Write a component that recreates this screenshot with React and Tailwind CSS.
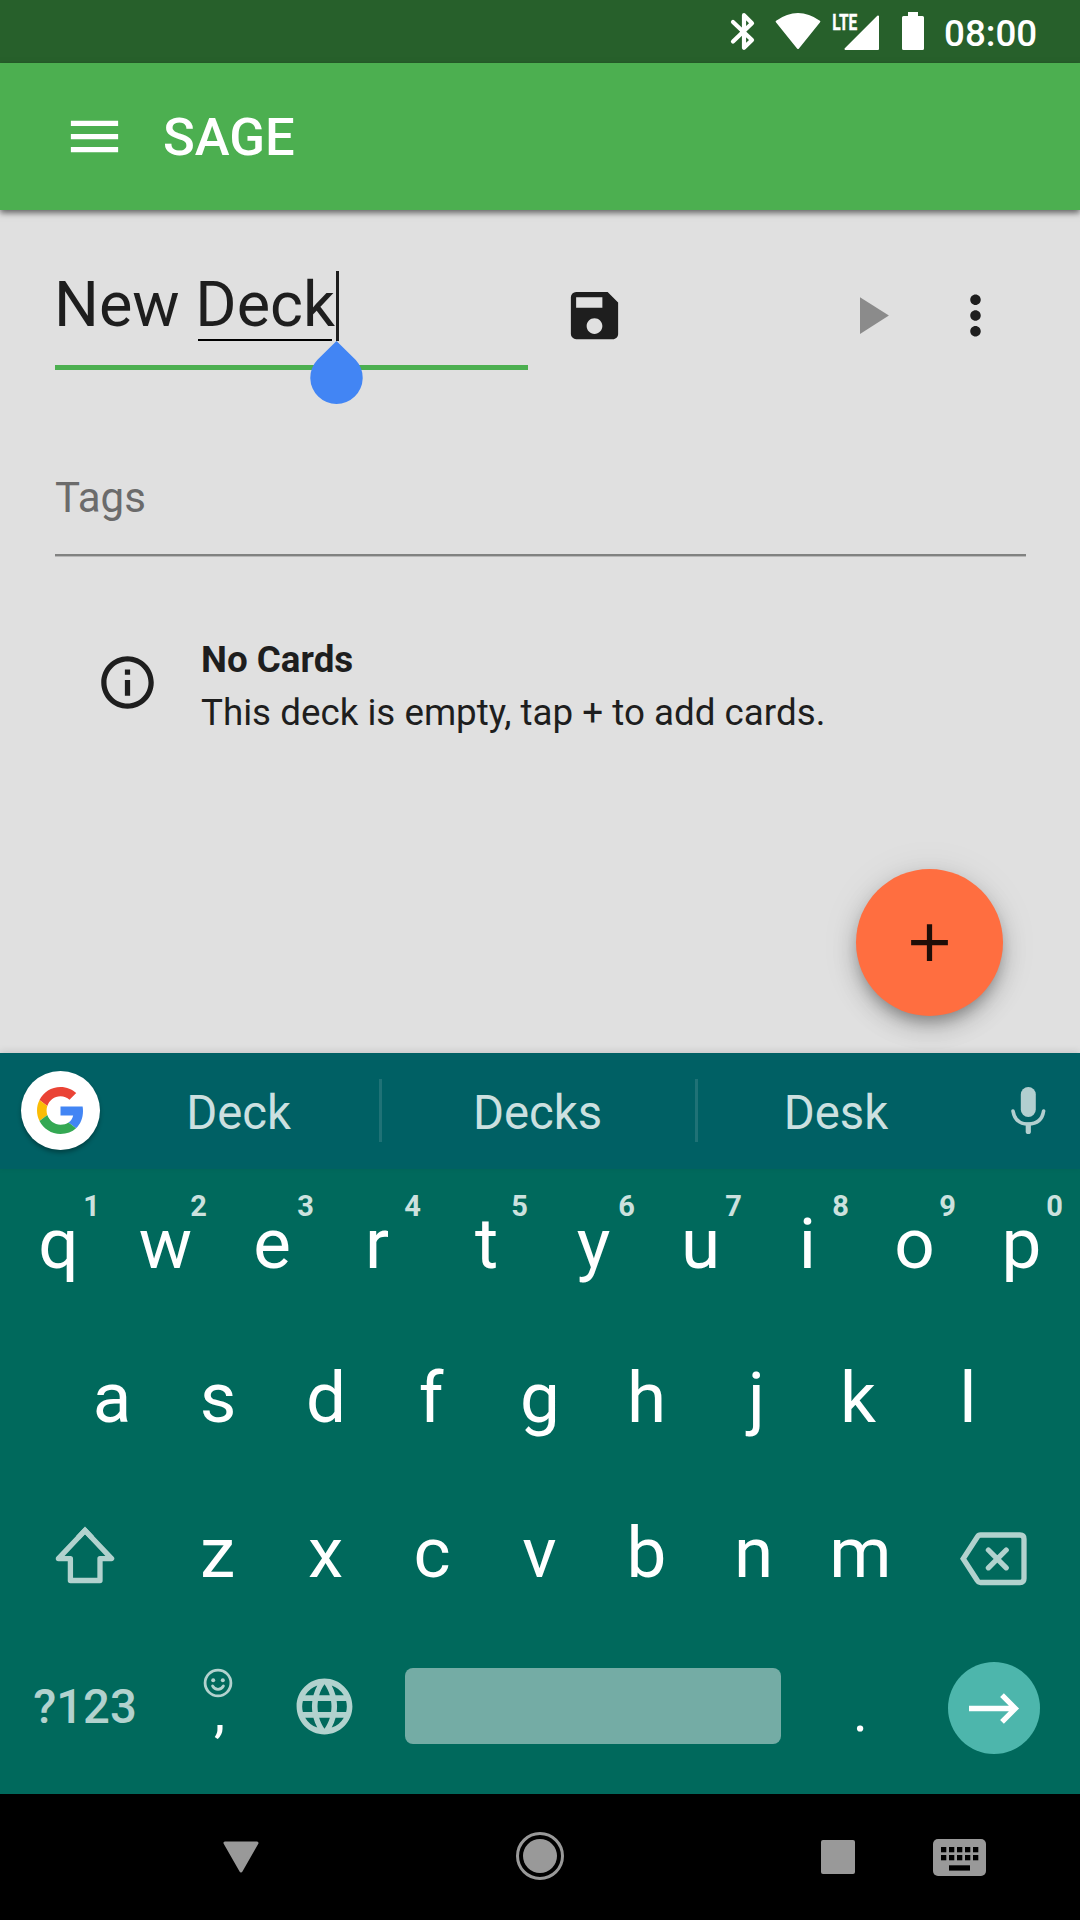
import React from "react";
import { MdMenu, MdSave, MdPlayArrow, MdMoreVert, MdInfoOutline, MdAdd, MdLanguage } from "react-icons/md";

function StatusBar() {
  return (
    <div className="flex h-[63px] shrink-0 items-start bg-[#27602b] pl-[728px] text-white">
      <svg className="mt-[10px] h-[43px] w-[30px]" viewBox="0 0 30 43" fill="none" stroke="currentColor" strokeWidth="4.2" strokeLinecap="round" strokeLinejoin="round">
        <path d="M5 12L24 30L16 37.8V5.2L24 13.2L5 31.5" />
      </svg>
      <svg className="ml-[17px] mt-[12px] h-[39px] w-[46px]" viewBox="0 0 46 39" fill="currentColor" stroke="currentColor" strokeWidth="2" strokeLinejoin="round">
        <path d="M23 36L1.7 9.5Q23 -5.5 44.3 9.5Z" />
      </svg>
      <svg className="ml-[7px] mt-[7px] h-[45px] w-[54px]" viewBox="-4 -4 54 45" fill="currentColor">
        <text x="0.3" y="18.8" fontSize="22.5" fontWeight="700" stroke="currentColor" strokeWidth="0.4" textLength="25" lengthAdjust="spacingAndGlyphs">LTE</text>
        <path d="M13.5 38L46 5.5V38Z" stroke="currentColor" strokeWidth="2" strokeLinejoin="round" />
      </svg>
      <svg className="ml-[20px] mt-[12px] h-[38px] w-[22px]" viewBox="0 0 22 38" fill="currentColor">
        <path d="M6 0H16V4H20.5Q22 4 22 5.5V36.5Q22 38 20.5 38H1.5Q0 38 0 36.5V5.5Q0 4 1.5 4H6Z" />
      </svg>
      <span className="ml-[20px] text-[36.75px] font-medium leading-[67px]">08:00</span>
    </div>
  );
}

function AppBar() {
  return (
    <header className="relative z-10 flex h-[147px] shrink-0 items-center bg-[#4caf50] pl-[63px] text-white shadow-[0_3px_6px_rgba(0,0,0,0.55)]">
      <MdMenu size={63} />
      <h1 className="ml-[37px] mt-[2px] text-[52.5px] font-medium leading-[63px]">SAGE</h1>
    </header>
  );
}

function DeckEditor() {
  return (
    <main className="relative flex h-[843px] shrink-0 flex-col bg-[#e0e0e0] pt-[50px] text-[#1e1e1e]">
      <div className="flex h-[110px] items-center pl-[55px]">
        <div className="relative h-[110px] w-[473px] border-b-[5px] border-[#4caf50]">
          <div className="-ml-px flex whitespace-pre text-[63px] leading-[89px]">
            <span>New </span>
            <span className="relative">
              Deck
              <span className="absolute left-[3px] top-[79px] h-[2px] w-[134px] bg-black" />
            </span>
          </div>
          <span className="absolute left-[281px] top-[11px] h-[70px] w-[2.5px] bg-[#1e1e1e]" />
          <svg className="absolute left-[255px] top-[81px] h-[63px] w-[53px] text-[#4285f4]" viewBox="0 0 53 63" fill="currentColor">
            <path d="M26.5 0L45.8 19A26.2 26.2 0 1 1 7.2 19Z" />
          </svg>
        </div>
        <MdSave size={63} className="ml-[35px]" />
        <MdPlayArrow size={63} className="ml-[212.5px] text-[#8b8b8b]" />
        <MdMoreVert size={63} className="ml-[42px]" />
      </div>
      <div className="ml-[55px] mt-[83px] h-[103px] w-[971px] border-b-2 border-[#818281] text-[42px] leading-[89px] text-[#6b6b6b] shadow-[0_1px_0_#b8b8b8]">Tags</div>
      <div className="mt-[76px] flex items-start pl-[96px]">
        <MdInfoOutline size={63} className="mt-[19px]" />
        <div className="ml-[42px] mt-px text-[36.75px] leading-[53px]">
          <p className="font-bold">No Cards</p>
          <p>This deck is empty, tap + to add cards.</p>
        </div>
      </div>
      <button className="absolute bottom-[37px] right-[77px] flex h-[147px] w-[147px] items-center justify-center rounded-full bg-[#ff6e40] text-[#200e08] shadow-[0_8px_13px_-3px_rgba(0,0,0,0.25),0_11px_24px_rgba(0,0,0,0.18),0_3px_40px_rgba(0,0,0,0.08)]">
        <MdAdd size={63} />
      </button>
    </main>
  );
}

function GoogleLogo() {
  return (
    <svg className="h-[47px] w-[47px]" viewBox="0 0 48 48">
      <path fill="#EA4335" d="M24 9.5c3.54 0 6.71 1.22 9.21 3.6l6.85-6.85C35.9 2.38 30.47 0 24 0 14.62 0 6.51 5.38 2.56 13.22l7.98 6.19C12.43 13.72 17.74 9.5 24 9.5z" />
      <path fill="#4285F4" d="M46.98 24.55c0-1.57-.15-3.09-.38-4.55H24v9.02h12.94c-.58 2.96-2.26 5.48-4.78 7.18l7.73 6c4.51-4.18 7.09-10.36 7.09-17.65z" />
      <path fill="#FBBC05" d="M10.53 28.59c-.48-1.45-.76-2.99-.76-4.59s.27-3.14.76-4.59l-7.98-6.19C.92 16.46 0 20.12 0 24c0 3.88.92 7.54 2.56 10.78l7.97-6.19z" />
      <path fill="#34A853" d="M24 48c6.48 0 11.93-2.13 15.89-5.81l-7.73-6c-2.15 1.45-4.92 2.3-8.16 2.3-6.26 0-11.57-4.22-13.47-9.91l-7.98 6.19C6.51 42.62 14.62 48 24 48z" />
    </svg>
  );
}

function SuggestionBar() {
  return (
    <div className="relative z-10 flex h-[116px] shrink-0 items-center bg-[#006064] pb-px text-[47.25px] text-[#cce0e0] shadow-[0_-2px_7px_rgba(0,0,0,0.1)]">
      <div className="ml-[21px] flex h-[79px] w-[79px] items-center justify-center rounded-full bg-white shadow-[0_3px_4px_rgba(0,0,0,0.3)]">
        <GoogleLogo />
      </div>
      <span className="mt-[6px] w-[279px] pr-[2px] text-center">Deck</span>
      <span className="h-[63px] w-[3px] bg-[#1f7276]" />
      <span className="mt-[6px] w-[313px] pr-[2px] text-center">Decks</span>
      <span className="h-[63px] w-[3px] bg-[#1f7276]" />
      <span className="mt-[6px] w-[278px] pr-[2px] text-center">Desk</span>
      <svg className="ml-[32px] h-[53px] w-[40px] text-[#b2cfd0]" viewBox="0 0 40 53" fill="none" stroke="currentColor" strokeLinecap="round">
        <rect x="12.8" y="3" width="15" height="30" rx="7.5" fill="currentColor" stroke="none" />
        <path d="M5 27Q7 40 20.3 40Q33.6 40 35.6 27" strokeWidth="3.6" />
        <path d="M20.3 41V47.4" strokeWidth="5.2" />
      </svg>
    </div>
  );
}

// Optical side bearings for letters whose ink is not centred in the advance box.
const BEARING = {
  e: "pr-[1px]",
  r: "pr-[5px]",
  f: "pr-[4px]",
  j: "pl-[5px]",
  k: "pr-[6px]",
  s: "pr-[2px]",
  z: "pr-[2px]",
  c: "pr-[1px]",
  h: "pr-[1px]",
};

function Key({ label, hint }) {
  return (
    <div className="relative flex h-full w-[107px] items-center justify-center text-[71px] leading-none text-white">
      <span className={BEARING[label]}>{label}</span>
      {hint && <span className="absolute right-[12px] top-[20px] text-[29px] font-bold leading-[34px] text-[#cce1de]">{hint}</span>}
    </div>
  );
}

const TOP = "qwertyuiop".split("");
const HOME = "asdfghjkl".split("");
const BOTTOM = "zxcvbnm".split("");

function Keyboard() {
  return (
    <section className="flex h-[625px] shrink-0 flex-col bg-[#00695c] text-[#b2d2ce]">
      <div className="flex h-[148px] items-center justify-center">
        {TOP.map((k, i) => (
          <Key key={k} label={k} hint={String((i + 1) % 10)} />
        ))}
      </div>
      <div className="flex h-[160px] items-center justify-center">
        {HOME.map((k) => (
          <Key key={k} label={k} />
        ))}
      </div>
      <div className="flex h-[151px] items-center">
        <div className="flex w-[165px] items-center justify-center pl-[5px]">
          <svg className="mt-[5px] h-[60px] w-[62px]" viewBox="0 0 62 60" fill="none" stroke="currentColor" strokeWidth="5.3">
            <path strokeLinejoin="round" d="M31 5.5L57.6 33.6H46V55.5H16.4V33.6H4.4Z" />
            <path d="M24 12.7L31 5.3L38 12.7" />
          </svg>
        </div>
        {BOTTOM.map((k) => (
          <Key key={k} label={k} />
        ))}
        <svg className="ml-[44px] mt-[11px] h-[57px] w-[71px]" viewBox="0 0 71 57" fill="none" stroke="currentColor" strokeWidth="5.3">
          <path d="M22.5 5H62Q66 5 66 9V48.5Q66 52.5 62 52.5H22.5Q20.5 52.5 19.3 50.5L5.2 28.8L19.3 7Q20.5 5 22.5 5Z" />
          <path strokeLinecap="round" d="M30.4 20L48.2 37.8M48.2 20L30.4 37.8" />
        </svg>
      </div>
      <div className="flex h-[158px] items-center">
        <span className="w-[168px] pl-[2px] text-center text-[47.25px] font-medium">?123</span>
        <div className="mt-[40px] flex w-[100px] flex-col items-center self-start">
          <svg className="h-[30px] w-[30px]" viewBox="0 0 30 30" fill="none" stroke="currentColor" strokeWidth="2.8">
            <circle cx="15" cy="15" r="12.9" />
            <circle cx="10.2" cy="12.2" r="2" fill="currentColor" stroke="none" />
            <circle cx="19.8" cy="12.2" r="2" fill="currentColor" stroke="none" />
            <path d="M9.6 18Q11.5 21.4 15 21.4Q18.5 21.4 20.4 18" strokeLinecap="round" />
          </svg>
          <span className="pl-[3px] text-[56px] leading-[28px] text-white">,</span>
        </div>
        <MdLanguage size={67} className="mb-[2px] ml-[23px]" />
        <div className="mb-[2px] ml-[47px] h-[76px] w-[376px] rounded-[8px] bg-[#74aca5]" />
        <span className="ml-[29px] mt-[10px] w-[100px] pl-px text-center text-[56px] leading-[60px] text-white">.</span>
        <div className="ml-[38px] mt-[2px] flex h-[92px] w-[92px] rounded-full bg-[#4db6ac] text-white">
          <svg className="h-[92px] w-[92px]" viewBox="0 0 92 92" fill="none" stroke="currentColor" strokeWidth="5.3">
            <path d="M21 46.5H67M54 33.2L67.3 46.5L54 59.8" />
          </svg>
        </div>
      </div>
    </section>
  );
}

function NavBar() {
  return (
    <nav className="flex h-[126px] shrink-0 items-center bg-black pl-[223px] text-[#999999]">
      <svg className="h-[34px] w-[36px]" viewBox="0 0 36 34" fill="currentColor" stroke="currentColor" strokeWidth="3" strokeLinejoin="round">
        <path d="M2 3H34L18 31Z" />
      </svg>
      <svg className="-mt-[2px] ml-[255.5px] h-[50px] w-[50px]" viewBox="0 0 50 50" fill="none" stroke="currentColor" strokeWidth="3">
        <circle cx="25" cy="25" r="22.5" />
        <circle cx="25" cy="25" r="17" fill="currentColor" stroke="none" />
      </svg>
      <div className="ml-[256.5px] h-[34px] w-[34px] rounded-[2px] bg-[#999999]" />
      <svg className="ml-[78px] mt-px h-[37px] w-[53px]" viewBox="0 0 53 37">
        <rect width="53" height="37" rx="5" fill="currentColor" />
        {[8, 16, 24, 32, 40].map((x) => (
          <React.Fragment key={x}>
            <rect x={x} y="8" width="5.3" height="5.3" fill="#000" />
            <rect x={x} y="16" width="5.3" height="5.3" fill="#000" />
          </React.Fragment>
        ))}
        <rect x="16" y="26.3" width="21" height="5.3" fill="#000" />
      </svg>
    </nav>
  );
}

export default function App() {
  return (
    <div className="flex h-[1920px] w-[1080px] flex-col overflow-hidden font-['Roboto',sans-serif]">
      <StatusBar />
      <AppBar />
      <DeckEditor />
      <SuggestionBar />
      <Keyboard />
      <NavBar />
    </div>
  );
}
